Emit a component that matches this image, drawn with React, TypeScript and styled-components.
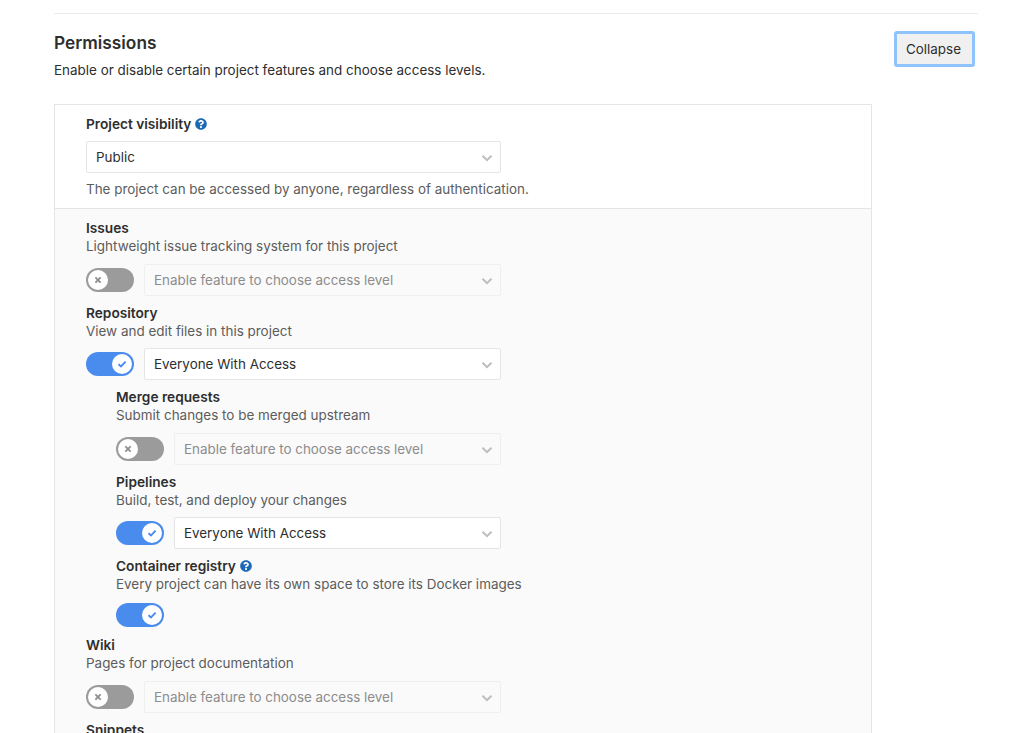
import React from 'react';
import styled, { createGlobalStyle } from 'styled-components';
import { FaQuestionCircle } from 'react-icons/fa';

const GlobalStyle = createGlobalStyle`
  html, body {
    margin: 0;
    height: 733px;
    overflow: hidden;
    background: #fff;
    font-family: Inter, "Liberation Sans", sans-serif;
    font-size: 14px;
    color: #2e2e2e;
  }
`;

const Section = styled.section`
  margin: 13px 46px 0 54px;
  border-top: 1px solid #eaeaea;
`;

const Header = styled.header`
  display: flex;
  justify-content: space-between;
  align-items: flex-start;
  padding: 17px 3px 0 0;
  height: 73px;
`;

const Heading = styled.h4`
  margin: 0;
  font-size: 17.3px;
  line-height: 24px;
  font-weight: 600;
`;

const Lead = styled.p`
  margin: 3px 0 0;
  font-size: 13.45px;
  line-height: 24px;
`;

const CollapseButton = styled.button`
  width: 81px;
  height: 36px;
  padding: 0 2px 1px 0;
  box-sizing: border-box;
  background: #f0f0f0;
  border: 3px solid #8fc3fb;
  border-radius: 3px;
  font: inherit;
  font-size: 13.4px;
  color: #2e2e2e;
`;

const Panel = styled.div`
  width: 818px;
  box-sizing: border-box;
  border: 1px solid #e5e5e5;
  border-bottom: 0;
`;

const VisibilityBlock = styled.div`
  padding: 10px 31px 0;
  background: #fff;
  border-bottom: 1px solid #e5e5e5;
  height: 104px;
  box-sizing: border-box;
`;

const FeatureList = styled.div`
  padding: 10px 31px 0;
  background: #fafafa;
  height: 560px;
`;

const Feature = styled.div<{ $nested?: boolean }>`
  margin-left: ${({ $nested }) => ($nested ? '30px' : '0')};
  padding-bottom: 8px;
`;

const Label = styled.div`
  display: flex;
  align-items: center;
  gap: 4px;
  font-size: 13.7px;
  line-height: 18px;
  font-weight: 600;
`;

const Help = styled(FaQuestionCircle)`
  width: 12px;
  height: 12px;
  color: #1b69b6;
`;

const Description = styled.div`
  font-size: 13.45px;
  line-height: 18.5px;
  color: #5c5c5c;
  white-space: nowrap;
`;

const Controls = styled.div`
  display: flex;
  align-items: center;
  gap: 10px;
  margin-top: 8px;
  max-width: 100%;
`;

const ToggleOnlyControls = styled(Controls)`
  margin-top: 9.5px;
  margin-bottom: 1px;
`;

const ToggleTrack = styled.span<{ $on: boolean }>`
  flex: none;
  display: flex;
  align-items: center;
  justify-content: ${({ $on }) => ($on ? 'flex-end' : 'flex-start')};
  width: 48px;
  height: 24px;
  padding: 0 2px;
  box-sizing: border-box;
  border-radius: 12px;
  background: ${({ $on }) => ($on ? '#4a8bee' : '#9b9b9b')};
`;

const ToggleThumb = styled.span`
  display: flex;
  align-items: center;
  justify-content: center;
  width: 20px;
  height: 20px;
  border-radius: 50%;
  background: #fff;
`;

const SelectBox = styled.div<{ $disabled?: boolean }>`
  flex: 1;
  display: flex;
  align-items: center;
  justify-content: space-between;
  height: 32px;
  padding: 0 7px 0 9px;
  box-sizing: border-box;
  border: 1px solid ${({ $disabled }) => ($disabled ? '#efefef' : '#e5e5e5')};
  border-radius: 2px;
  background: ${({ $disabled }) => ($disabled ? '#fafafa' : '#fff')};
  color: ${({ $disabled }) => ($disabled ? '#8c8c8c' : '#2e2e2e')};
  font-size: 13.4px;
`;

const VisibilitySelect = styled(SelectBox)`
  width: 415px;
  flex: none;
  margin-top: 8px;
`;

const VisibilityHelp = styled(Description)`
  margin-top: 7px;
`;

const ChevronIcon = styled.svg`
  margin-top: 2px;
`;

const Chevron = () => (
  <ChevronIcon width="12" height="12" viewBox="0 0 12 12" fill="none">
    <path d="M1.5 3.8 6 8.2l4.5-4.4" stroke="#bdbdbd" strokeWidth="2" />
  </ChevronIcon>
);

const ToggleIcon = ({ on }: { on: boolean }) => (
  <svg width="10" height="10" viewBox="0 0 10 10" fill="none">
    {on ? (
      <path d="M1.5 5.2 4 7.5l4.6-4.8" stroke="#4a8bee" strokeWidth="1.9" />
    ) : (
      <path d="M2.4 2.4l5.2 5.2M7.6 2.4 2.4 7.6" stroke="#8f8f8f" strokeWidth="1.9" />
    )}
  </svg>
);

const Toggle = ({ on }: { on: boolean }) => (
  <ToggleTrack $on={on}>
    <ToggleThumb>
      <ToggleIcon on={on} />
    </ToggleThumb>
  </ToggleTrack>
);

interface FeatureRowProps {
  name: string;
  text: string;
  on?: boolean;
  nested?: boolean;
}

const FeatureRow = ({ name, text, on = false, nested }: FeatureRowProps) => (
  <Feature $nested={nested}>
    <Label>{name}</Label>
    <Description>{text}</Description>
    <Controls>
      <Toggle on={on} />
      <SelectBox $disabled={!on}>
        {on ? 'Everyone With Access' : 'Enable feature to choose access level'}
        <Chevron />
      </SelectBox>
    </Controls>
  </Feature>
);

const FeatureColumn = styled.div`
  width: 415px;
`;

export default function App() {
  return (
    <>
      <GlobalStyle />
      <Section>
        <Header>
          <div>
            <Heading>Permissions</Heading>
            <Lead>Enable or disable certain project features and choose access levels.</Lead>
          </div>
          <CollapseButton>Collapse</CollapseButton>
        </Header>
        <Panel>
          <VisibilityBlock>
            <Label>
              Project visibility
              <Help />
            </Label>
            <VisibilitySelect>
              Public
              <Chevron />
            </VisibilitySelect>
            <VisibilityHelp>The project can be accessed by anyone, regardless of authentication.</VisibilityHelp>
          </VisibilityBlock>
          <FeatureList>
            <FeatureColumn>
              <FeatureRow name="Issues" text="Lightweight issue tracking system for this project" />
              <FeatureRow name="Repository" text="View and edit files in this project" on />
              <FeatureRow name="Merge requests" text="Submit changes to be merged upstream" nested />
              <FeatureRow name="Pipelines" text="Build, test, and deploy your changes" on nested />
              <Feature $nested>
                <Label>
                  Container registry
                  <Help />
                </Label>
                <Description>Every project can have its own space to store its Docker images</Description>
                <ToggleOnlyControls>
                  <Toggle on />
                </ToggleOnlyControls>
              </Feature>
              <FeatureRow name="Wiki" text="Pages for project documentation" />
              <Label>Snippets</Label>
            </FeatureColumn>
          </FeatureList>
        </Panel>
      </Section>
    </>
  );
}
